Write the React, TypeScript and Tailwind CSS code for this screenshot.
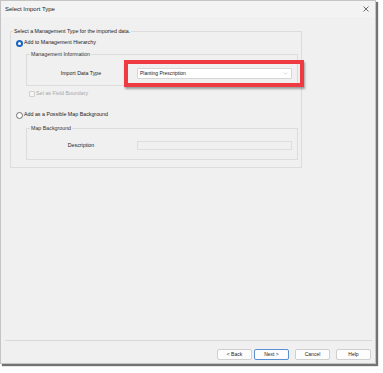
import { ChevronDown } from "lucide-react";

const font = "font-['Segoe_UI','Liberation_Sans',Arial,sans-serif]";

function Radio({ checked }: { checked?: boolean }) {
  return checked ? (
    <span className="flex h-[7px] w-[7px] items-center justify-center rounded-full bg-[#1a64c4]">
      <span className="h-[3px] w-[3px] rounded-full bg-white" />
    </span>
  ) : (
    <span className="h-[7px] w-[7px] rounded-full border border-[#6f6f6f] bg-white" />
  );
}

function Button({ label, focused }: { label: string; focused?: boolean }) {
  return (
    <button
      className={
        "flex h-[11px] w-[35px] items-center justify-center rounded-[2px] border bg-[#fdfdfd] text-[5px] text-[#222] " +
        (focused ? "border-[#5b8fd1]" : "border-[#cfcfcf]")
      }
    >
      {label}
    </button>
  );
}

export default function App() {
  return (
    <div className={`h-[373px] w-[383px] bg-white ${font}`}>
      <div className="flex h-[364px] w-[376px] flex-col border border-[#c4c4c4] bg-[#f0f0f0] shadow-[2px_2px_1px_rgba(0,0,0,0.55)]">
        {/* Title bar */}
        <div className="flex h-[16px] items-center justify-between bg-[#f3f3f3] pl-[4px] pr-[6px]">
          <span className="text-[6px] text-[#1b1b1b]">Select Import Type</span>
          <svg width="6" height="6" viewBox="0 0 6 6">
            <path d="M0.5 0.5 L5.5 5.5 M5.5 0.5 L0.5 5.5" stroke="#333" strokeWidth="0.7" />
          </svg>
        </div>

        {/* Management type group */}
        <fieldset className="ml-[9px] mt-[11px] w-[292px] border border-[#dcdcdc] pb-[7px]">
          <legend className="ml-[2px] px-[1px] text-[5.3px] leading-[7px] text-[#222]">
            Select a Management Type for the imported data.
          </legend>

          <div className="ml-[5px] mt-[4px] flex h-[8px] items-center gap-[1px] text-[5.3px] text-[#222]">
            <Radio checked />
            <span>Add to Management Hierarchy</span>
          </div>

          <fieldset className="ml-[15px] mr-[3px] mt-[4px] border border-[#dcdcdc] pb-[6px] pt-[10px]">
            <legend className="ml-[3px] px-[1px] text-[5.3px] leading-[7px] text-[#333]">
              Management Information
            </legend>
            <div className="flex items-center">
              <span className="w-[108px] text-center text-[5.3px] text-[#222]">Import Data Type</span>
              <div className="relative ml-[2px]">
                <div className="flex h-[11px] w-[155px] items-center justify-between rounded-[1px] border border-[#d6d6d6] bg-white pl-[2px] pr-[3px]">
                  <span className="text-[5px] text-[#1b1b1b]">Planting Prescription</span>
                  <ChevronDown size={5} strokeWidth={1.5} color="#777" />
                </div>
                <div className="pointer-events-none absolute bottom-[-8px] left-[-13px] right-[-12px] top-[-8px] border-[4px] border-[#ee3a40] shadow-[1px_2px_2px_rgba(0,0,0,0.35)]" />
              </div>
            </div>
          </fieldset>

          <div className="ml-[18px] mt-[4px] flex h-[8px] items-center gap-[1px] text-[5.3px] text-[#a8a8a8]">
            <span className="h-[6px] w-[6px] rounded-[1px] border border-[#cfcfcf] bg-[#f4f4f4]" />
            <span>Set as Field Boundary</span>
          </div>

          <div className="ml-[5px] mt-[13px] flex h-[8px] items-center gap-[1px] text-[5.3px] text-[#222]">
            <Radio />
            <span>Add as a Possible Map Background</span>
          </div>

          <fieldset className="ml-[15px] mr-[3px] mt-[6px] border border-[#dcdcdc] pb-[9px] pt-[9px]">
            <legend className="ml-[3px] px-[1px] text-[5.3px] leading-[7px] text-[#333]">
              Map Background
            </legend>
            <div className="flex items-center">
              <span className="w-[108px] text-center text-[5.3px] text-[#222]">Description</span>
              <div className="ml-[2px] h-[9px] w-[155px] border border-[#dedede] bg-[#f0f0f0]" />
            </div>
          </fieldset>
        </fieldset>

        <div className="flex-1" />

        {/* Footer */}
        <div className="ml-[4px] mr-[3px] h-px bg-[#d8d8d8]" />
        <div className="flex justify-end pb-[3px] pr-[4px] pt-[8px]">
          <Button label="< Back" />
          <div className="ml-[2px]">
            <Button label="Next >" focused />
          </div>
          <div className="ml-[6px]">
            <Button label="Cancel" />
          </div>
          <div className="ml-[6px]">
            <Button label="Help" />
          </div>
        </div>
      </div>
    </div>
  );
}
